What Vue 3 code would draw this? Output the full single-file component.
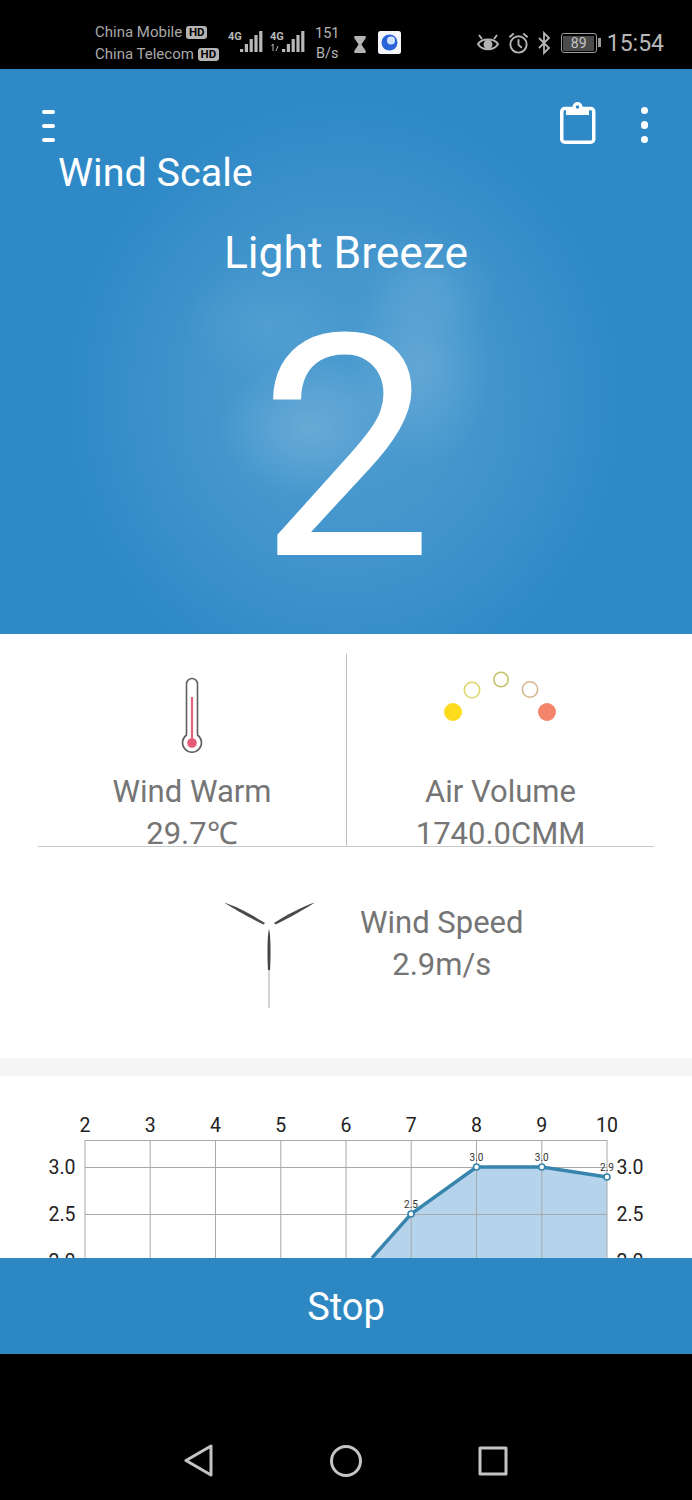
<template>
  <div class="phone">
    <header class="status">
      <div class="carriers">
        <div class="carrier">China Mobile <span class="hd">HD</span></div>
        <div class="carrier">China Telecom <span class="hd">HD</span></div>
      </div>
      <svg class="signal" viewBox="0 0 80 26" width="80" height="26">
        <text x="0" y="11" class="net">4G</text>
        <g v-for="s in [0, 42]" :key="s" fill="#b8b8b8">
          <rect v-for="(h, i) in [3, 8, 13, 17, 21]" :key="i" :x="s + 12 + i * 4.8" :y="23 - h" width="3.200" :height="h" />
        </g>
        <text x="42" y="11" class="net">4G</text>
        <path d="M45 15V22M43.500 17L45 15M48 22L50 17" stroke="#b8b8b8" stroke-width="1" fill="none" />
      </svg>
      <div class="speed"><div>151</div><div>B/s</div></div>
      <svg class="hourglass" viewBox="0 0 12 18" width="12" height="17">
        <path d="M0 0H12V2.500L7.500 9L12 15.500V18H0V15.500L4.500 9L0 2.500Z" fill="#b4b4b4" />
      </svg>
      <svg class="app" viewBox="0 0 23 23" width="23" height="23">
        <rect width="23" height="23" rx="2.500" fill="#f4f6fa" />
        <circle cx="11.500" cy="11.500" r="8" fill="#2b63d9" />
        <circle cx="13" cy="9.500" r="4" fill="#cfe3fa" />
      </svg>
      <div class="status-right">
        <svg viewBox="0 0 24 22" width="24" height="22" fill="none" stroke="#b4b4b4" stroke-width="2">
          <path d="M2 12C6 6 18 6 22 12C18 19 6 19 2 12Z" />
          <circle cx="12" cy="12.500" r="3.500" fill="#b4b4b4" />
          <path d="M3 3L6 7M21 3L18 7" />
        </svg>
        <svg viewBox="0 0 24 24" width="23" height="24" fill="none" stroke="#b4b4b4" stroke-width="2">
          <circle cx="12" cy="13.500" r="8.500" />
          <path d="M12 8V14L15.500 17M2.500 6L7 2M21.500 6L17 2" />
        </svg>
        <svg viewBox="0 0 14 24" width="14" height="24" fill="none" stroke="#b4b4b4" stroke-width="1.800">
          <path d="M2 7L12 17L7 22V2L12 7L2 17" />
        </svg>
        <div class="battery"><span class="level">89</span></div>
        <span class="clock">15:54</span>
      </div>
    </header>

    <section class="hero">
      <div class="hero-top">
        <div class="menu"><i></i><i></i><i></i></div>
        <svg class="clipboard" viewBox="0 0 36 42" width="36" height="42" fill="none">
          <rect x="1.750" y="6.500" width="32" height="33.750" rx="3" stroke="#fff" stroke-width="3.500" />
          <path d="M6 5H12.500A5 5 0 0 1 22.500 5H29V13H6Z" fill="#fff" />
          <circle cx="17.500" cy="5" r="1.700" fill="#2f88c5" />
        </svg>
        <div class="dots"><i></i><i></i><i></i></div>
      </div>
      <div class="page-title">Wind Scale</div>
      <div class="level-name">Light Breeze</div>
      <div class="level-num">2</div>
    </section>

    <section class="info">
      <div class="info-top">
        <div class="cell">
          <svg class="cell-icon" viewBox="0 -7 24 84" width="24" height="84" fill="none">
            <path d="M6.500 58V7A5.500 5.500 0 0 1 17.500 7V58A9.500 9.500 0 1 1 6.500 58Z" stroke="#5f5f5f" stroke-width="1.600" />
            <path d="M12 20V66" stroke="#e0637f" stroke-width="2.200" />
            <circle cx="12" cy="66" r="4.800" fill="#e85a7a" />
          </svg>
          <div class="label">Wind Warm</div>
          <div class="value">29.7℃</div>
        </div>
        <div class="cell">
          <svg class="cell-icon" viewBox="1 0 120 84" width="120" height="84" fill="none" stroke-width="1.600">
            <circle cx="13" cy="42" r="9" fill="#fcdc1c" />
            <circle cx="32" cy="20" r="7.700" stroke="#dcd668" />
            <circle cx="61" cy="9.500" r="7.200" stroke="#c4c46c" />
            <circle cx="90" cy="19.500" r="7.700" stroke="#d6b890" />
            <circle cx="107" cy="42" r="9" fill="#f4856c" />
          </svg>
          <div class="label">Air Volume</div>
          <div class="value">1740.0CMM</div>
        </div>
      </div>
      <div class="speed-row">
        <svg class="fan" viewBox="0 0 92 106" width="92" height="106">
          <path d="M0 0.500C12 4 30 14 41 21L39.500 22.500C26 16 10 7 0 0.500Z" fill="#4a4a4a" />
          <path d="M91 0.500C79 4 61 14 50 21L51.500 22.500C65 16 81 7 91 0.500Z" fill="#4a4a4a" />
          <path d="M45 27C43.500 32 43 50 44 68H46C47 50 46.500 32 45 27Z" fill="#444" />
          <path d="M45 68V106" stroke="#c0c0c0" stroke-width="1.400" />
        </svg>
        <div class="speed-text">
          <div class="label">Wind Speed</div>
          <div class="value">2.9m/s</div>
        </div>
      </div>
    </section>

    <section class="chart-wrap">
      <svg class="chart" viewBox="0 0 692 182" width="692" height="182">
        <rect x="85" y="64" width="522" height="118" fill="#fff" />
        <path d="M372 182L411 138L476.500 91L541.800 91L607 101V182Z" fill="#b5d4ec" />
        <g stroke="#a8a8a8" stroke-width="1">
          <path d="M85 64.500H607M85 91.500H607M85 138.500H607" />
          <line v-for="x in gridX" :key="x" :x1="x" :x2="x" y1="64" y2="182" />
        </g>
        <path d="M372 182L411 138L476.500 91L541.800 91L607 101" fill="none" stroke="#3784ad" stroke-width="3.400" />
        <g class="axis">
          <text v-for="(x, i) in gridX" :key="x" :x="x" y="56" text-anchor="middle">{{ i + 2 }}</text>
          <text x="62" y="98" text-anchor="middle">3.0</text>
          <text x="62" y="145" text-anchor="middle">2.5</text>
          <text x="62" y="192" text-anchor="middle">2.0</text>
          <text x="630" y="98" text-anchor="middle">3.0</text>
          <text x="630" y="145" text-anchor="middle">2.5</text>
          <text x="630" y="192" text-anchor="middle">2.0</text>
        </g>
        <g v-for="p in points" :key="p.x">
          <circle :cx="p.x" :cy="p.y" r="3" fill="#fff" stroke="#3784ad" stroke-width="1.600" />
          <text class="point" :x="p.x" :y="p.y - 6" text-anchor="middle">{{ p.v }}</text>
        </g>
      </svg>
    </section>

    <button class="stop" type="button">Stop</button>

    <nav class="nav">
      <svg viewBox="0 0 30 34" width="30" height="34" fill="none" stroke="#c4c4c4" stroke-width="3" stroke-linejoin="round">
        <path d="M27 2V31L2 16.500Z" />
      </svg>
      <svg viewBox="0 0 34 34" width="34" height="34" fill="none" stroke="#c4c4c4" stroke-width="3">
        <circle cx="17" cy="17" r="14.500" />
      </svg>
      <svg viewBox="0 0 30 30" width="30" height="30" fill="none" stroke="#c4c4c4" stroke-width="3" stroke-linejoin="round">
        <rect x="2" y="2" width="26" height="26" />
      </svg>
    </nav>
  </div>
</template>

<script setup>
const gridX = [85, 150.2, 215.5, 280.8, 346, 411.2, 476.5, 541.8, 607]

const points = [
  { x: 411, y: 138, v: '2.5' },
  { x: 476.5, y: 91, v: '3.0' },
  { x: 541.8, y: 91, v: '3.0' },
  { x: 607, y: 101, v: '2.9' }
]
</script>

<style>
html, body {
  margin: 0;
  background: #000;
}
</style>

<style scoped>
.phone {
  width: 692px;
  height: 1500px;
  display: flex;
  flex-direction: column;
  font-family: Roboto, "Liberation Sans", sans-serif;
  background: #000;
  overflow: hidden;
}

/* status bar */
.status {
  height: 69px;
  box-sizing: border-box;
  padding: 21px 28px 0 95px;
  display: flex;
  align-items: flex-start;
  color: #b4b4b4;
}
.carriers {
  width: 133px;
  font-size: 15px;
  line-height: 22px;
  color: #a8a8a8;
}
.carrier {
  white-space: nowrap;
}
.hd {
  display: inline-block;
  vertical-align: 1px;
  background: #b4b4b4;
  color: #000;
  font-size: 11.500px;
  font-weight: 700;
  line-height: 13px;
  padding: 0 3px;
  border-radius: 3px;
}
.signal {
  margin-top: 8px;
}
.net {
  font-size: 11px;
  font-weight: 700;
  fill: #b8b8b8;
}
.speed {
  margin-left: 7px;
  font-size: 14.500px;
  line-height: 20px;
  text-align: center;
  margin-top: 3px;
}
.hourglass {
  margin: 15px 0 0 15px;
}
.app {
  margin: 10px 0 0 12px;
}
.status-right {
  margin-left: auto;
  display: flex;
  align-items: center;
  gap: 7px;
  height: 44px;
}
.battery {
  position: relative;
  width: 36px;
  height: 20px;
  border: 1.500px solid #9a9a9a;
  border-radius: 3px;
  box-sizing: border-box;
  padding: 1.500px;
  margin: 0 3px;
}
.battery::after {
  content: "";
  position: absolute;
  right: -5px;
  top: 4px;
  width: 2.500px;
  height: 9px;
  background: #9a9a9a;
}
.level {
  display: block;
  height: 100%;
  background: #4a4a4a;
  color: #c4c4c4;
  font-size: 14px;
  line-height: 14px;
  text-align: center;
}
.clock {
  font-size: 23px;
  color: #b8b8b8;
}

/* hero */
.hero {
  height: 565px;
  box-sizing: border-box;
  padding: 33px 38px 0 42px;
  color: #fff;
  background:
    radial-gradient(ellipse 90px 70px at 309px 359px, rgba(150, 196, 226, 0.38), rgba(150, 196, 226, 0.16) 60%, transparent),
    radial-gradient(ellipse 70px 105px at 420px 295px, rgba(150, 196, 226, 0.34), rgba(150, 196, 226, 0.14) 60%, transparent),
    radial-gradient(ellipse 80px 60px at 265px 256px, rgba(130, 186, 222, 0.2), transparent),
    radial-gradient(ellipse 70px 55px at 430px 215px, rgba(130, 186, 222, 0.22), transparent),
    radial-gradient(ellipse 280px 300px at 344px 330px, rgba(110, 175, 218, 0.5), rgba(110, 175, 218, 0.3) 55%, transparent),
    #2e89c6;
}
.hero-top {
  display: flex;
  align-items: center;
  height: 42px;
}
.menu {
  display: flex;
  flex-direction: column;
  gap: 10px;
  margin: 6px auto 0 0;
}
.menu i {
  display: block;
  width: 13px;
  height: 4px;
  border-radius: 2px;
  background: #fff;
}
.clipboard {
  margin-right: 45px;
}
.dots {
  display: flex;
  flex-direction: column;
  gap: 7px;
  margin: 4px 6px 0 0;
}
.dots i {
  display: block;
  width: 7.500px;
  height: 7.500px;
  border-radius: 50%;
  background: #fff;
}
.page-title {
  margin: 4px 0 0 16px;
  font-size: 39.500px;
  line-height: 50px;
}
.level-name {
  margin: 30px -38px 0 -42px;
  text-align: center;
  font-size: 44.400px;
  line-height: 50px;
}
.level-num {
  margin: 21px -38px 0 -42px;
  text-align: center;
  font-size: 310px;
  font-weight: 400;
  line-height: 300px;
}

/* readings */
.info {
  height: 424px;
  background: #fff;
  color: #757575;
  box-sizing: border-box;
  padding-top: 20px;
}
.info-top {
  margin: 0 38px;
  height: 193px;
  box-sizing: border-box;
  display: grid;
  grid-template-columns: 309px 307px;
  border-bottom: 1px solid #c8c8c8;
  overflow: hidden;
}
.cell {
  text-align: center;
}
.cell:first-child {
  border-right: 1px solid #c0c0c0;
}
.cell-icon {
  display: block;
  margin: 16px auto 0;
}
.label {
  font-size: 31px;
  line-height: 42px;
}
.value {
  font-size: 31px;
  line-height: 42px;
}
.cell .label {
  margin-top: 17px;
}
.speed-row {
  display: flex;
  align-items: flex-start;
  padding: 55px 0 0 224px;
}
.fan {
  flex: none;
}
.speed-text {
  margin-left: 44px;
  text-align: center;
}

/* chart */
.chart-wrap {
  margin-top: 18px;
  height: 182px;
  background: #fff;
  overflow: hidden;
  box-shadow: 0 -18px 0 #f5f5f5;
}
.chart {
  display: block;
}
.axis text {
  font-size: 19.500px;
  fill: #222;
}
.point {
  font-size: 10px;
  fill: #333;
}

/* bottom */
.stop {
  height: 96px;
  flex: none;
  border: 0;
  padding: 2px 0 0;
  background: #2d87c3;
  color: #fff;
  font-family: inherit;
  font-size: 38px;
}
.nav {
  flex: 1;
  background: #000;
  display: flex;
  justify-content: center;
  align-items: center;
  gap: 115px;
  padding-top: 68px;
}
</style>
